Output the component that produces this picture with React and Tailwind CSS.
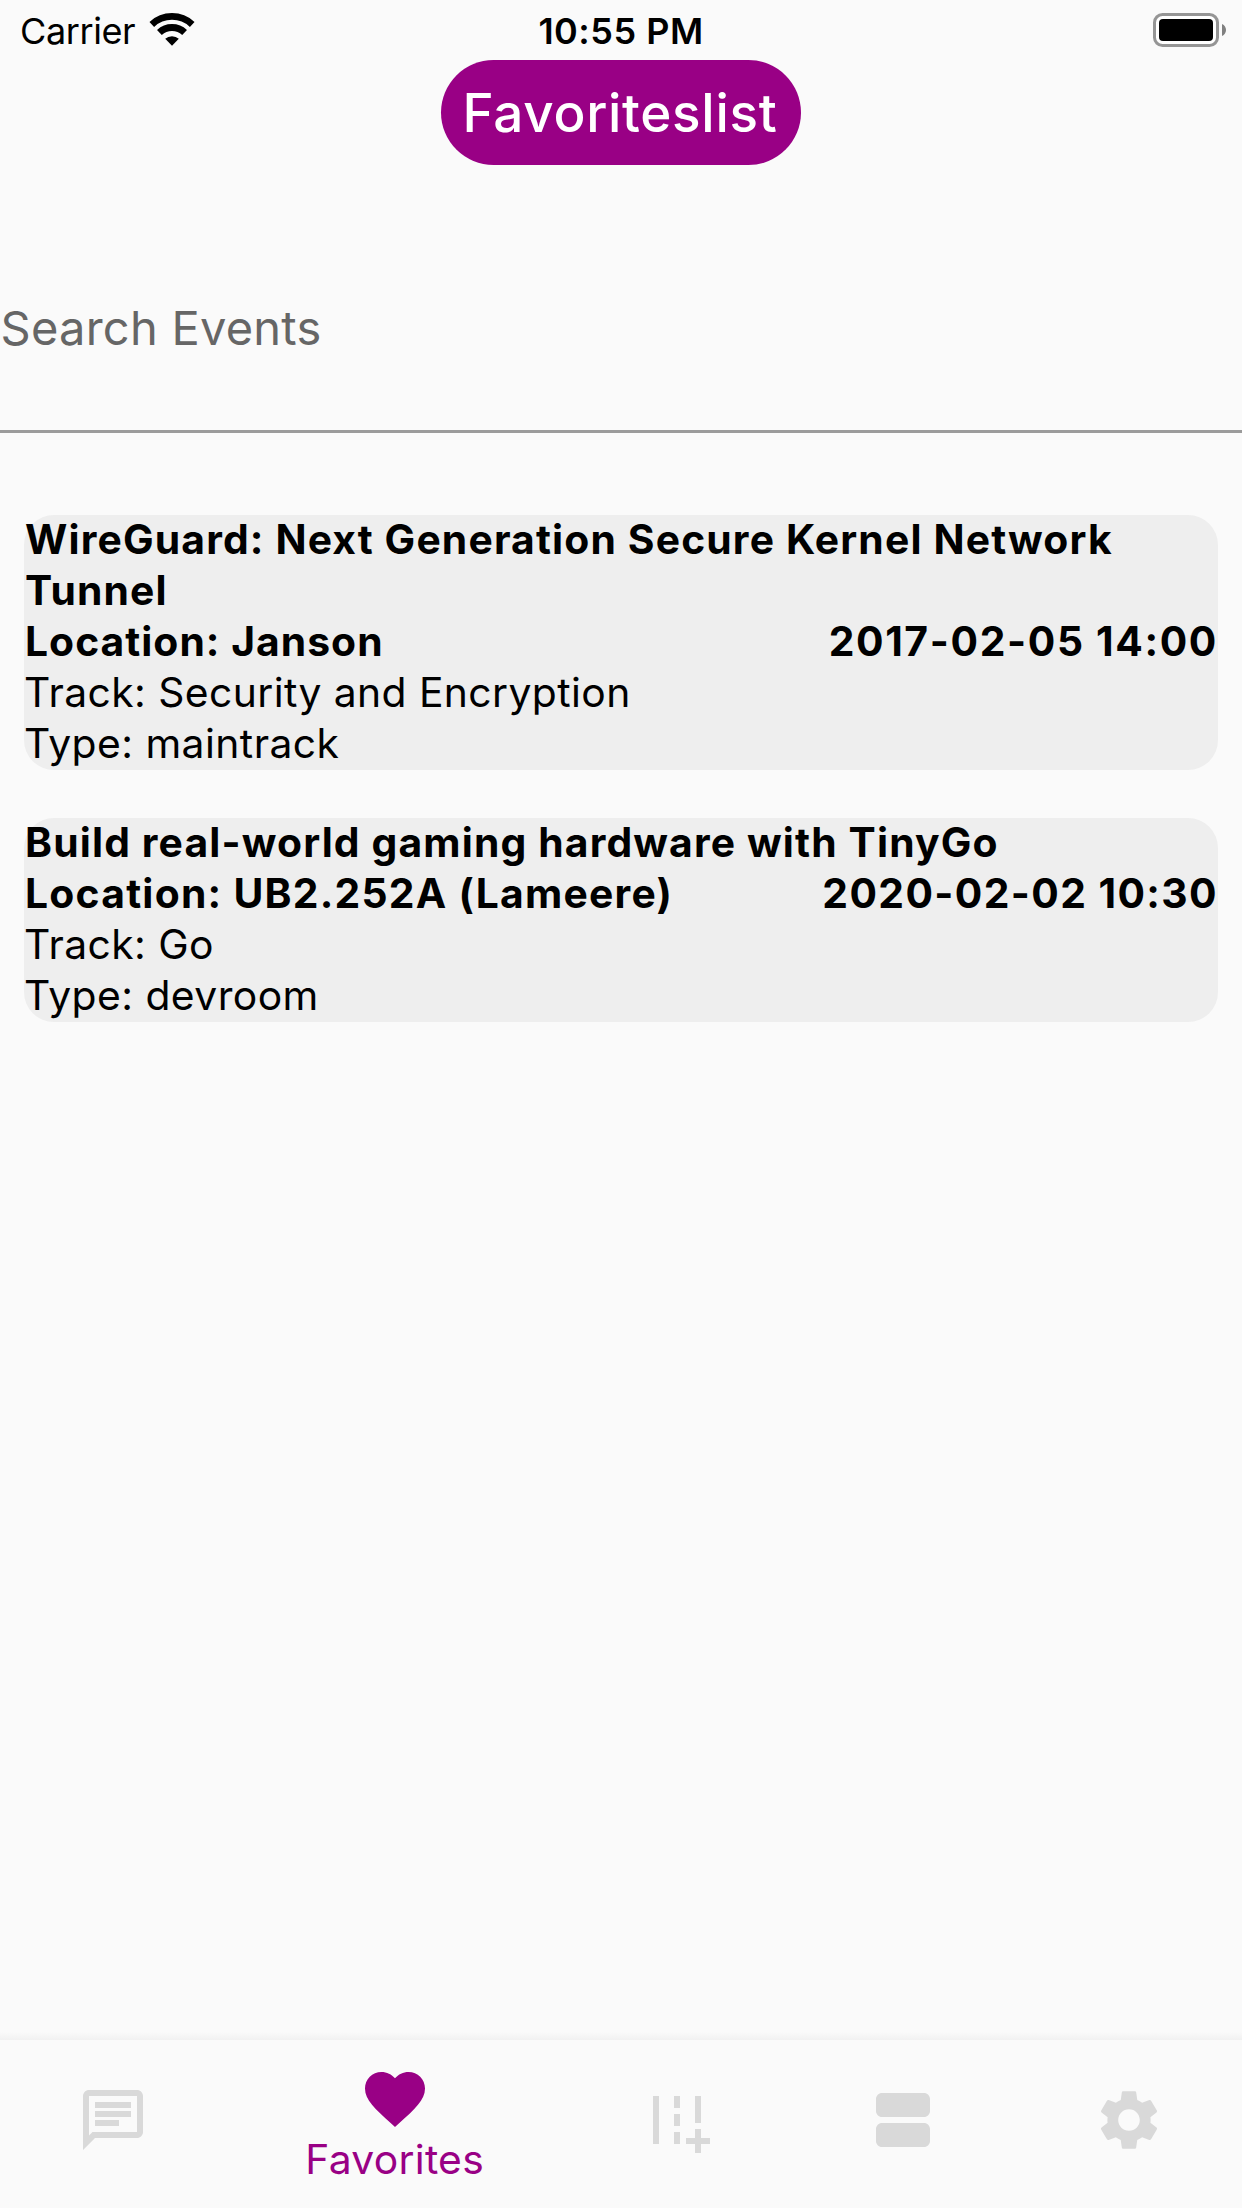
const events = [
  {
    title: "WireGuard: Next Generation Secure Kernel Network Tunnel",
    location: "Janson",
    date: "2017-02-05 14:00",
    track: "Security and Encryption",
    type: "maintrack",
    locationClass: "tracking-[1.03px]",
    dateClass: "tracking-[1.65px]",
  },
  {
    title: "Build real-world gaming hardware with TinyGo",
    location: "UB2.252A (Lameere)",
    date: "2020-02-02 10:30",
    track: "Go",
    type: "devroom",
    locationClass: "tracking-[1.25px]",
    dateClass: "tracking-[1.4px]",
  },
];

const icons = {
  chat: "M4 4h16v12H5.17L4 17.17V4m0-2c-1.1 0-1.99.9-1.99 2L2 22l4-4h14c1.1 0 2-.9 2-2V4c0-1.1-.9-2-2-2H4zm2 10h8v2H6v-2zm0-3h12v2H6V9zm0-3h12v2H6V6z",
  heart: "M12 21.35l-1.45-1.32C5.4 15.36 2 12.28 2 8.5 2 5.42 4.42 3 7.5 3c1.74 0 3.41.81 4.5 2.09C13.09 3.81 14.76 3 16.5 3 19.58 3 22 5.42 22 8.5c0 3.78-3.4 6.86-8.55 11.54L12 21.35z",
  road: "M20 18v-3h-2v3h-3v2h3v3h2v-3h3v-2zM18 4h2v9h-2zM4 4h2v16H4zM11 4h2v4h-2zM11 10h2v4h-2zM11 16h2v4h-2z",
  agenda: "M19 13H5c-1.1 0-2 .9-2 2v4c0 1.1.9 2 2 2h14c1.1 0 2-.9 2-2v-4c0-1.1-.9-2-2-2zm0-10H5c-1.1 0-2 .9-2 2v4c0 1.1.9 2 2 2h14c1.1 0 2-.9 2-2V5c0-1.1-.9-2-2-2z",
  settings: "M19.14 12.94c.04-.3.06-.61.06-.94 0-.32-.02-.64-.07-.94l2.03-1.58c.18-.14.23-.41.12-.61l-1.92-3.32c-.12-.22-.37-.29-.59-.22l-2.39.96c-.5-.38-1.03-.7-1.62-.94L14.4 2.81c-.04-.24-.24-.41-.48-.41h-3.84c-.24 0-.43.17-.47.41L9.25 5.35c-.59.24-1.13.57-1.62.94l-2.39-.96c-.22-.08-.47 0-.59.22L2.74 8.87c-.12.21-.08.47.12.61l2.03 1.58c-.05.3-.09.63-.09.94s.02.64.07.94l-2.03 1.58c-.18.14-.23.41-.12.61l1.92 3.32c.12.22.37.29.59.22l2.39-.96c.5.38 1.03.7 1.62.94l.36 2.54c.05.24.24.41.48.41h3.84c.24 0 .44-.17.47-.41l.36-2.54c.59-.24 1.13-.56 1.62-.94l2.39.96c.22.08.47 0 .59-.22l1.92-3.32c.12-.22.07-.47-.12-.61l-2.01-1.58zM12 15.6c-1.98 0-3.6-1.62-3.6-3.6s1.62-3.6 3.6-3.6 3.6 1.62 3.6 3.6-1.62 3.6-3.6 3.6z",
};

function Icon({ name }) {
  return (
    <svg viewBox="0 0 24 24" className="size-[72px] shrink-0 fill-current">
      <path d={icons[name]} />
    </svg>
  );
}

function Wifi() {
  return (
    <svg viewBox="-23 -34 46 34" className="mt-[12px] ml-[13.5px] h-[34px] w-[46px]" fill="none" stroke="black">
      <path d="M-20.2 -21.6A29.6 29.6 0 0 1 20.2 -21.6" strokeWidth="6.8" />
      <path d="M-12.6 -13.5A18.5 18.5 0 0 1 12.6 -13.5" strokeWidth="7" />
      <path d="M0 -0.3L-6.8 -7.2A10 10 0 0 1 6.8 -7.2Z" fill="black" stroke="none" />
    </svg>
  );
}

function Battery() {
  return (
    <svg viewBox="0 0 74 34" className="mt-[13px] mr-[15px] h-[34px] w-[74px]">
      <rect x="1.5" y="1.5" width="63" height="31" rx="8" fill="white" stroke="#959595" strokeWidth="3" />
      <rect x="6" y="6" width="54" height="22" rx="4" fill="black" />
      <path d="M69 11c2.600 1 4 3.500 4 6s-1.400 5-4 6z" fill="#808080" />
    </svg>
  );
}

function StatusBar() {
  return (
    <header className="grid h-[60px] grid-cols-[1fr_auto_1fr] items-start text-[36px] leading-[62px]">
      <div className="flex items-start pl-[20px]">
        <span className="tracking-[-0.4px]">Carrier</span>
        <Wifi />
      </div>
      <span className="font-semibold tracking-[0.5px]">10:55 PM</span>
      <div className="flex justify-end">
        <Battery />
      </div>
    </header>
  );
}

function EventCard({ event }) {
  return (
    <article className="rounded-[30px] bg-[#eeeeee] text-[40.8px] leading-[51px]">
      <div className="-translate-y-px">
        <h2 className="pl-px font-bold tracking-[1.16px]">{event.title}</h2>
        <div className="flex justify-between pl-px font-bold">
          <span className={event.locationClass}>Location: {event.location}</span>
          <time className={event.dateClass}>{event.date}</time>
        </div>
        <p className="tracking-[0.42px]">Track: {event.track}</p>
        <p className="tracking-[0.45px]">Type: {event.type}</p>
      </div>
    </article>
  );
}

function Tab({ name }) {
  return (
    <button className="flex flex-1 items-center justify-center text-[#d9d9d9]">
      <Icon name={name} />
    </button>
  );
}

export default function App() {
  return (
    <div className="flex h-[2208px] w-[1242px] flex-col overflow-hidden bg-[#fafafa] font-['Inter',sans-serif] text-black">
      <StatusBar />
      <h1 className="flex h-[105px] w-[360px] items-center justify-center self-center rounded-full bg-[#990085] pt-[2px] pr-[2px] text-[53px] font-medium tracking-[0.7px] text-white">
        Favoriteslist
      </h1>
      <div className="mt-[60px] flex h-[208px] items-center border-b-[3px] border-[#9b9b9b] pt-px pl-[0.5px] text-[47px] tracking-[0.25px] text-[#666666]">
        Search Events
      </div>
      <main className="mt-[82px] flex flex-1 flex-col gap-12 px-6">
        {events.map((event) => (
          <EventCard key={event.title} event={event} />
        ))}
      </main>
      <div className="h-[8px] bg-linear-to-b from-[#fafafa] to-[#f1f1f1]" />
      <nav className="flex h-[168px] items-stretch bg-[#fafafa] pb-2">
        <Tab name="chat" />
        <button className="flex flex-[1.5] flex-col items-center pt-[23px] text-[#990085]">
          <Icon name="heart" />
          <span className="pr-px text-[40.8px] leading-[48px] tracking-[0.28px]">Favorites</span>
        </button>
        <Tab name="road" />
        <Tab name="agenda" />
        <Tab name="settings" />
      </nav>
    </div>
  );
}
